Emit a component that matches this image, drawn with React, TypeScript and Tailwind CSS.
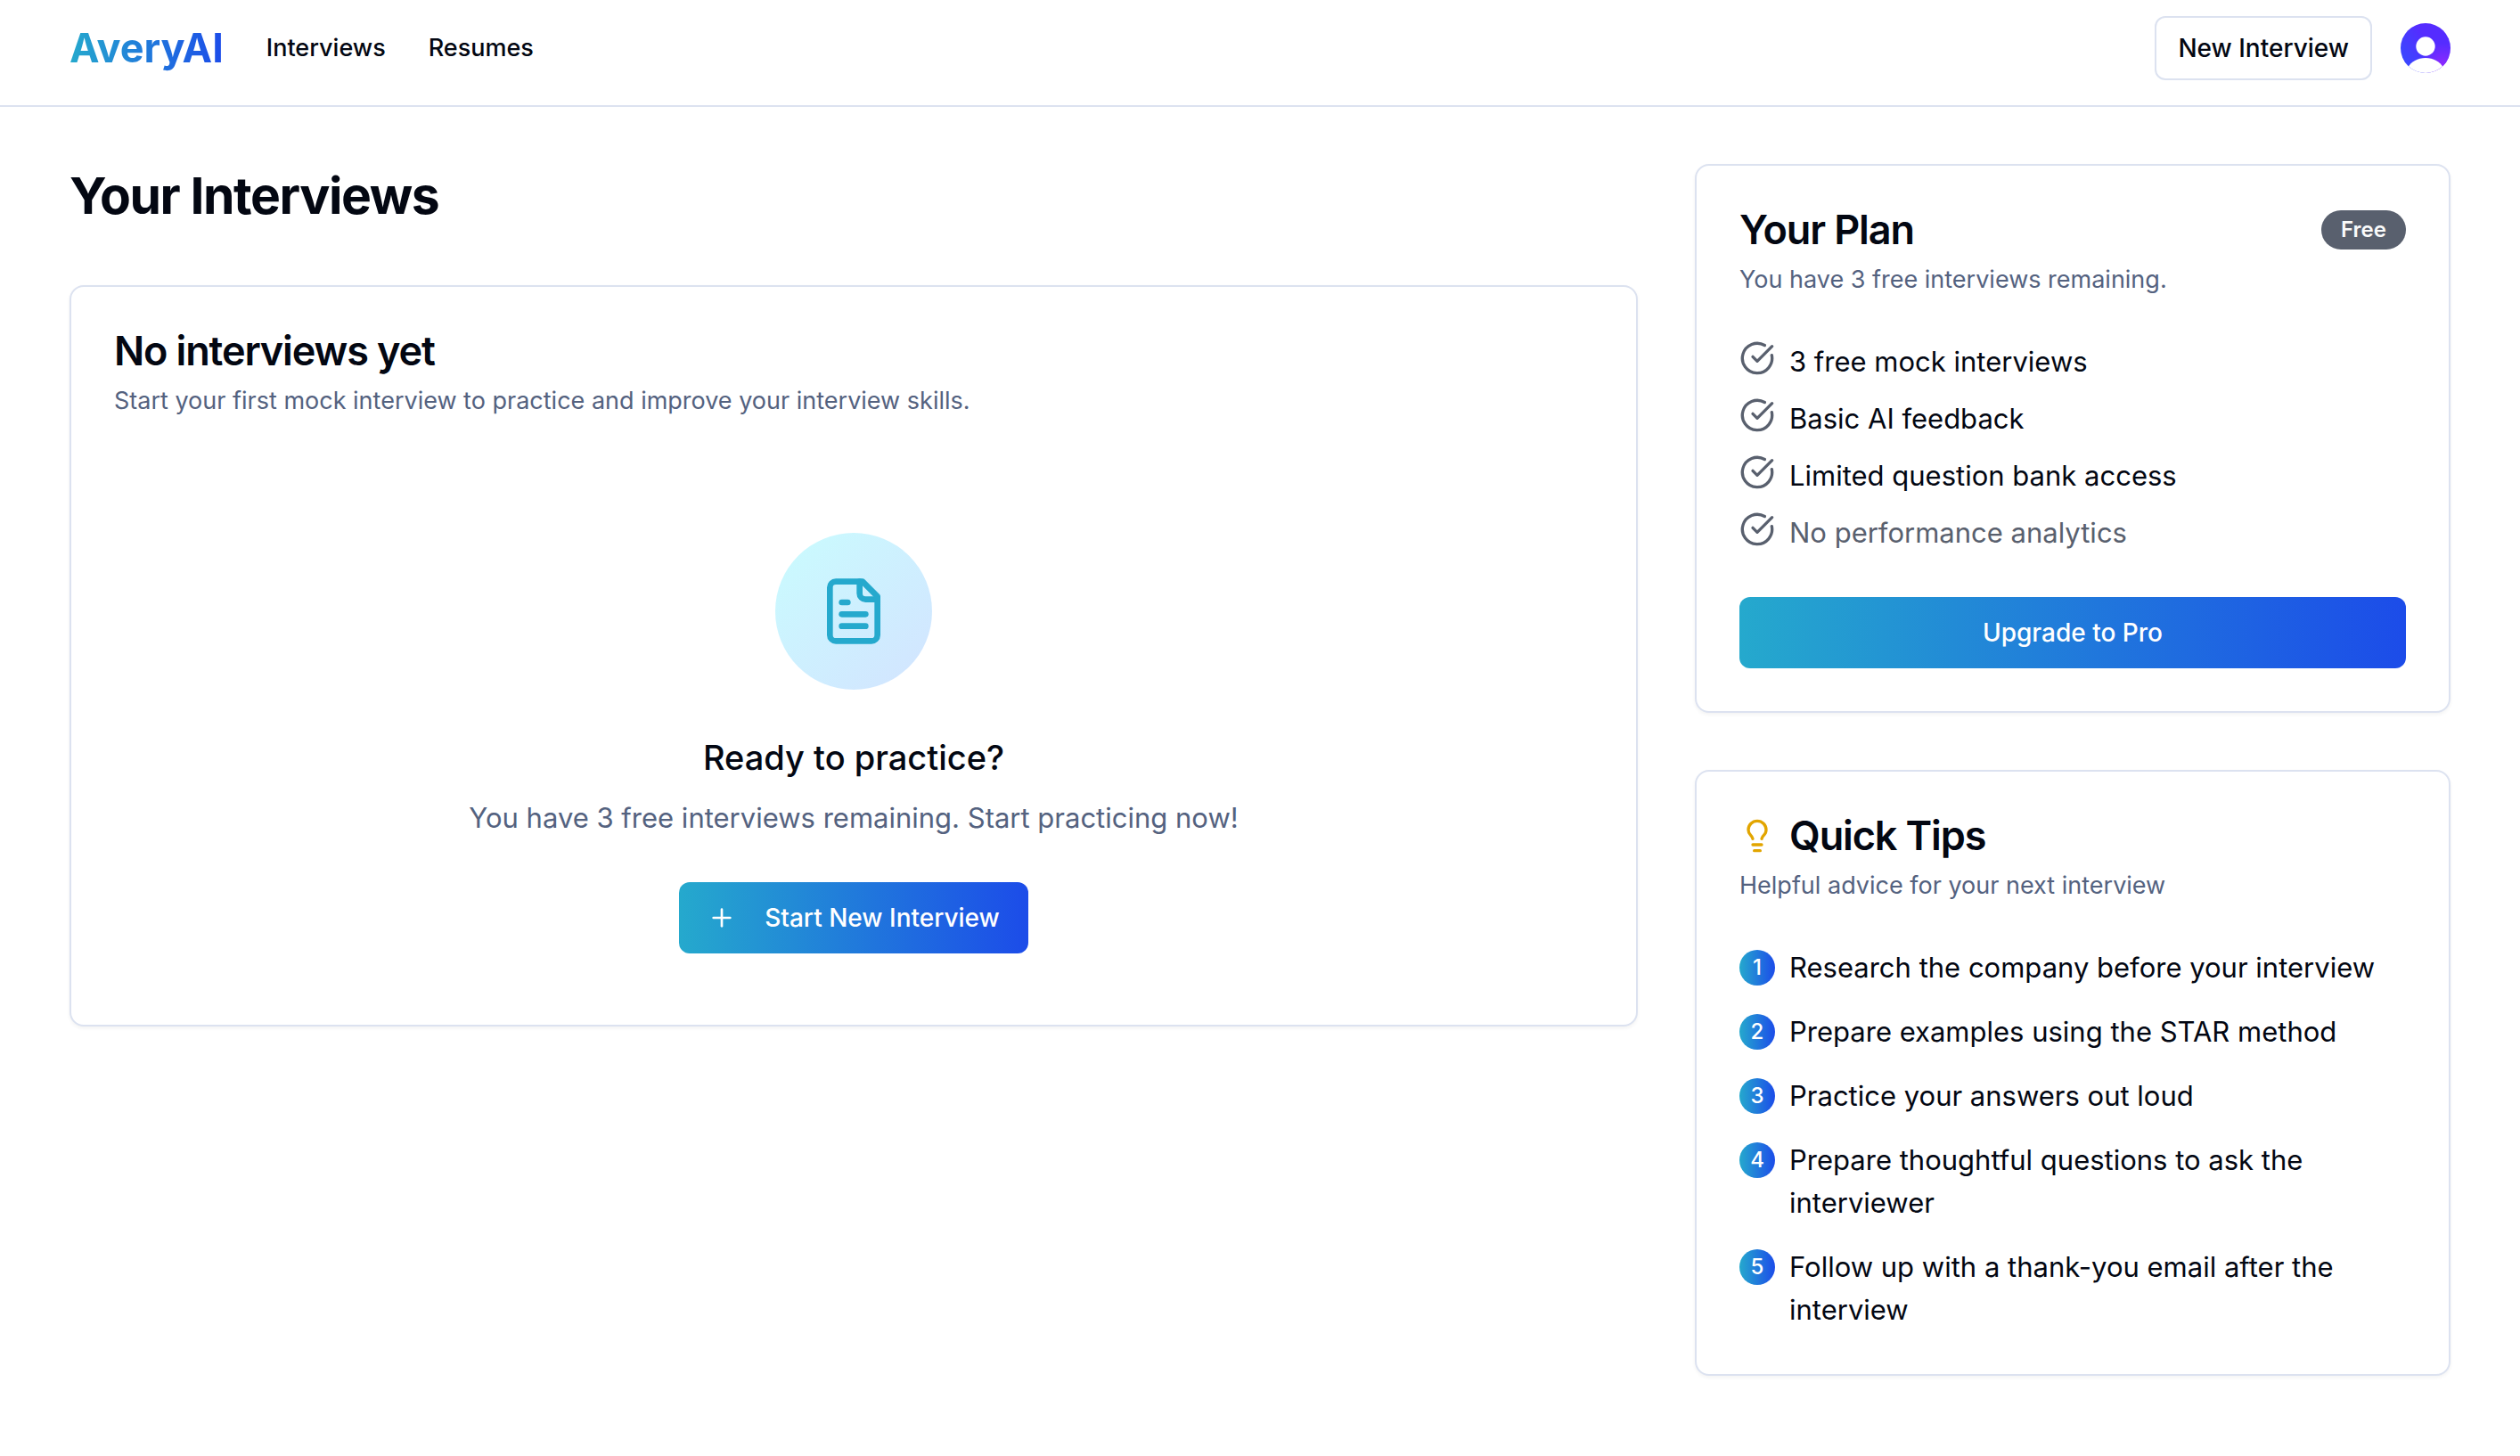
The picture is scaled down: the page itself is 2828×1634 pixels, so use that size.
import type { ReactNode } from "react";
import { CircleCheckBig, Lightbulb, Plus } from "lucide-react";

const planFeatures = [
  { text: "3 free mock interviews", included: true },
  { text: "Basic AI feedback", included: true },
  { text: "Limited question bank access", included: true },
  { text: "No performance analytics", included: false },
];

const tips = [
  "Research the company before your interview",
  "Prepare examples using the STAR method",
  "Practice your answers out loud",
  "Prepare thoughtful questions to ask the interviewer",
  "Follow up with a thank-you email after the interview",
];

function Card({ children }: { children: ReactNode }) {
  return (
    <section className="rounded-2xl border-2 border-[#dce2f0] bg-white p-12 shadow-[0_2px_4px_rgba(0,0,0,0.05)]">
      {children}
    </section>
  );
}

function CardTitle({ children }: { children: ReactNode }) {
  return <h2 className="text-[45px] leading-12 font-semibold tracking-tight">{children}</h2>;
}

function CardDescription({ children }: { children: ReactNode }) {
  return <p className="mt-3 text-[27px] leading-10 text-[#54627f]">{children}</p>;
}

function FileTextIcon() {
  return (
    <svg
      viewBox="0 0 24 24"
      className="size-20 text-[#25a9cd]"
      fill="none"
      stroke="currentColor"
      strokeWidth="2"
      strokeLinecap="round"
      strokeLinejoin="round"
      aria-hidden="true"
    >
      <path d="M15 2H6a2 2 0 0 0-2 2v16a2 2 0 0 0 2 2h12a2 2 0 0 0 2-2V7Z" />
      <path d="M14 2v4a2 2 0 0 0 2 2h4" />
      <path d="M10 9H8" />
      <path d="M16 13H8" />
      <path d="M16 17H8" />
    </svg>
  );
}

function Avatar() {
  return (
    <svg viewBox="0 0 56 56" className="size-14" aria-hidden="true">
      <defs>
        <linearGradient id="avatar-base" x1="0" y1="0.6" x2="0.5" y2="0.3">
          <stop offset="0" stopColor="#3b46ff" />
          <stop offset="1" stopColor="#552cff" />
        </linearGradient>
        <radialGradient id="avatar-glow" cx="0.85" cy="0.85" r="0.45">
          <stop offset="0" stopColor="#8f29ff" />
          <stop offset="1" stopColor="#8f29ff" stopOpacity="0" />
        </radialGradient>
        <clipPath id="avatar-clip">
          <circle cx="28" cy="28" r="28" />
        </clipPath>
      </defs>
      <g clipPath="url(#avatar-clip)">
        <rect width="56" height="56" fill="url(#avatar-base)" />
        <rect width="56" height="56" fill="url(#avatar-glow)" />
        <circle cx="28" cy="26" r="10.7" fill="#fff" />
        <path d="M8 50C12 43 19 39 28 39s16 4 20 11v6H8Z" fill="#fff" />
      </g>
    </svg>
  );
}

export default function App() {
  return (
    <div className="min-h-screen bg-white font-[Inter,sans-serif] text-[#030712]">
      <header className="border-b-2 border-[#dce2f0]">
        <div className="mx-auto flex max-w-[2800px] items-center justify-between px-16 pt-[18px] pb-7">
          <nav className="flex items-center gap-12 text-[27px] leading-10 font-medium">
            <a
              href="#home"
              className="bg-linear-to-r/srgb from-[#25a9cd] to-[#1c4ce9] bg-clip-text text-[45px] leading-16 font-bold text-transparent"
            >
              AveryAI
            </a>
            <a href="#interviews">Interviews</a>
            <a href="#resumes">Resumes</a>
          </nav>
          <div className="flex items-center gap-8">
            <button
              type="button"
              className="h-18 rounded-xl border-2 border-[#dce2f0] bg-white px-6 text-[28px] leading-10 font-medium"
            >
              New Interview
            </button>
            <button type="button" aria-label="Open account menu" className="rounded-full">
              <Avatar />
            </button>
          </div>
        </div>
      </header>

      <main className="mx-auto grid max-w-[2800px] grid-cols-3 items-start gap-16 px-16 py-16">
        <div className="col-span-2">
          <h1 className="mb-16 text-[57px] leading-18 font-bold tracking-tight">Your Interviews</h1>
          <Card>
            <CardTitle>No interviews yet</CardTitle>
            <CardDescription>
              Start your first mock interview to practice and improve your interview skills.
            </CardDescription>
            <div className="mt-12 flex flex-col items-center pt-20 pb-8 text-center">
              <div className="rounded-full bg-linear-to-br/srgb from-[#c9fcfe] to-[#d3e3ff] p-12">
                <FileTextIcon />
              </div>
              <h3 className="mt-12 text-[38px] leading-14 font-medium">Ready to practice?</h3>
              <p className="mt-4 text-[31px] leading-12 text-[#54627f]">
                You have 3 free interviews remaining. Start practicing now!
              </p>
              <button
                type="button"
                className="mt-12 flex h-20 items-center gap-8 rounded-xl bg-linear-to-r/srgb from-[#25a9cd] to-[#1c4ce9] px-8 text-[28px] leading-10 font-medium text-white"
              >
                <Plus className="size-8" aria-hidden="true" />
                Start New Interview
              </button>
            </div>
          </Card>
        </div>

        <div className="flex flex-col gap-16">
          <Card>
            <div className="flex h-12 items-center justify-between">
              <CardTitle>Your Plan</CardTitle>
              <span className="rounded-full bg-[#59606e] px-[22px] py-1.5 text-2xl leading-8 font-semibold text-[#f9fafb]">
                Free
              </span>
            </div>
            <CardDescription>You have 3 free interviews remaining.</CardDescription>
            <ul className="mt-12 flex flex-col gap-4 text-[31px] leading-12">
              {planFeatures.map((feature) => (
                <li key={feature.text} className="flex items-start gap-4">
                  <CircleCheckBig className="size-10 shrink-0 text-[#59606e]" aria-hidden="true" />
                  <span className={feature.included ? "" : "text-[#59606e]"}>{feature.text}</span>
                </li>
              ))}
            </ul>
            <button
              type="button"
              className="mt-12 h-20 w-full rounded-xl bg-linear-to-r/srgb from-[#25a9cd] to-[#1c4ce9] text-[28px] leading-10 font-medium text-white"
            >
              Upgrade to Pro
            </button>
          </Card>

          <Card>
            <div className="flex items-center gap-4">
              <Lightbulb className="size-10 text-[#e2a500]" aria-hidden="true" />
              <CardTitle>Quick Tips</CardTitle>
            </div>
            <CardDescription>Helpful advice for your next interview</CardDescription>
            <ol className="mt-12 flex flex-col gap-6 text-[31px] leading-12">
              {tips.map((tip, index) => (
                <li key={tip} className="flex items-start gap-4">
                  <span className="mt-1 flex size-10 shrink-0 items-center justify-center rounded-full bg-linear-to-r/srgb from-[#25a9cd] to-[#1c4ce9] text-2xl leading-8 font-medium text-white">
                    {index + 1}
                  </span>
                  <span>{tip}</span>
                </li>
              ))}
            </ol>
          </Card>
        </div>
      </main>
    </div>
  );
}
